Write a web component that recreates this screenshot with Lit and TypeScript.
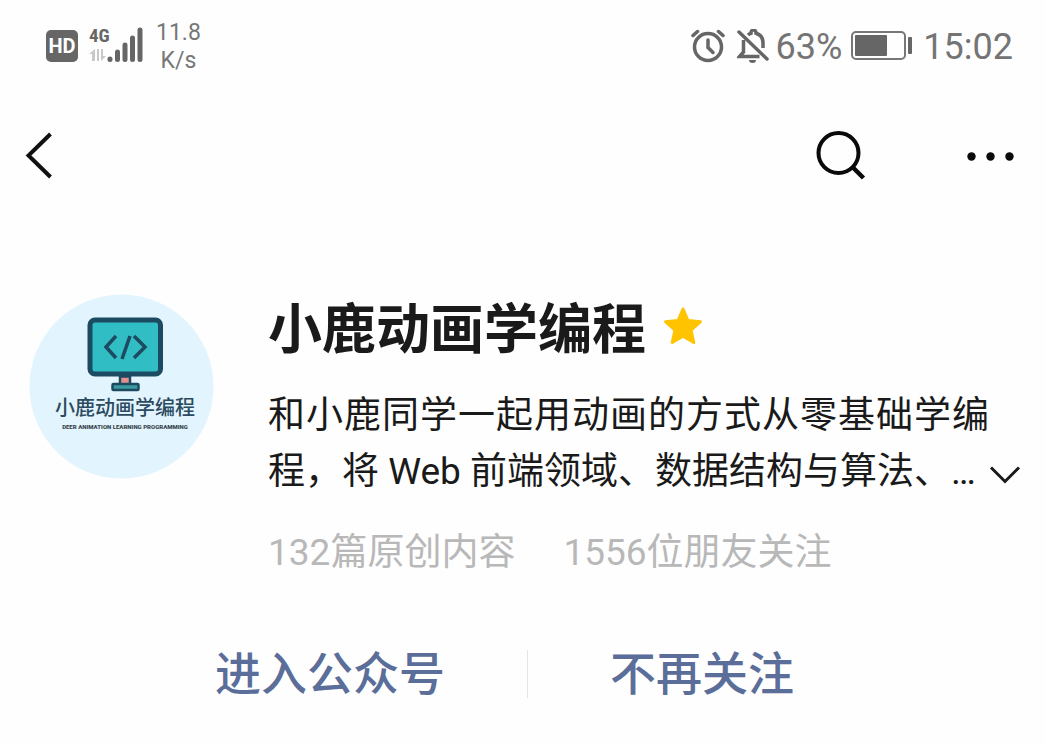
import { LitElement, html, css } from "lit";
import { customElement, property } from "lit/decorators.js";

@customElement("status-bar")
class StatusBar extends LitElement {
  static styles = css`
    :host {
      display: flex;
      justify-content: space-between;
      align-items: center;
      height: 92px;
      padding: 0 32px 0 46px;
      box-sizing: border-box;
      color: #747474;
      font-family: Roboto, "Noto Sans CJK SC", sans-serif;
      font-weight: 400;
    }
    svg { display: block; flex: none; }
    .group { display: flex; align-items: center; }
    .network { margin-left: 10px; }
    .hd { font: 700 20px Roboto, sans-serif; fill: #fff; }
    .gen { font: 700 19px "Roboto Condensed", "Liberation Sans Narrow", Roboto, sans-serif; fill: #666; }
    .speed {
      margin-left: 12px;
      padding-top: 2px;
      font-size: 23px;
      line-height: 28px;
      text-align: center;
      color: #777;
    }
    .value { font-size: 36px; line-height: 44px; padding-top: 2px; }
    .bell { margin: 0 7px 0 12px; }
    .battery { margin: 0 10px 0 9px; }
  `;

  render() {
    return html`
      <div class="group">
        <svg width="32" height="34" viewBox="0 0 32 34" role="img" aria-label="HD">
          <rect y="1" width="32" height="32" rx="5" fill="#666" />
          <text class="hd" x="16" y="24" text-anchor="middle">HD</text>
        </svg>
        <svg class="network" width="56" height="48" viewBox="0 0 56 48" role="img" aria-label="4G">
          <text class="gen" x="1" y="20">4G</text>
          <path d="M7 27v12H4v-7H1zM9 27h2v12H9zM13 27h2v7h3l-5 5z" fill="#c8c8c8" />
          <g stroke="#666" stroke-width="5" stroke-linecap="round">
            <path d="M22 37v.5M29.500 30v7.500M37 23v14.500M44.500 16v21.500M52 8v29.500" />
          </g>
        </svg>
        <div class="speed">11.8<br />K/s</div>
      </div>
      <div class="group">
        <svg width="34" height="34" viewBox="0 0 34 34" fill="none" stroke="#666" stroke-linecap="round">
          <circle cx="17" cy="18" r="13.500" stroke-width="3.500" />
          <path d="M17 11v7.500l5 5" stroke-width="3.500" />
          <path d="M2 6.500 6.500 2.500M32 6.500 27.500 2.500" stroke-width="3.500" />
        </svg>
        <svg class="bell" width="32" height="34" viewBox="0 0 32 34" fill="none" stroke="#666" stroke-width="3.500">
          <path d="M2 3 30 30" stroke-linecap="round" />
          <path d="M6.500 11v12l-4 4.500h20M11 6c1-1 2-1.500 3-1.800V3.500a2.500 2.500 0 0 1 5 0v.7c4.500 1.300 7 5 7 9.800v5" />
          <path d="M12 31h7a3.500 3 0 0 1-7 0z" fill="#666" stroke="none" />
        </svg>
        <span class="value">63%</span>
        <svg class="battery" width="62" height="30" viewBox="0 0 62 30">
          <rect x="1" y="1" width="53" height="27" rx="4" fill="none" stroke="#777" stroke-width="2" />
          <rect x="4" y="4" width="32" height="21" rx="1" fill="#666" />
          <rect x="57" y="6" width="4" height="17" rx="1" fill="#666" />
        </svg>
        <span class="value">15:02</span>
      </div>
    `;
  }
}

@customElement("nav-bar")
class NavBar extends LitElement {
  static styles = css`
    :host {
      display: flex;
      justify-content: space-between;
      align-items: center;
      height: 128px;
      padding: 0 29px 0 24px;
      box-sizing: border-box;
    }
    button { display: block; padding: 0; border: 0; background: none; cursor: pointer; }
    svg { display: block; }
    .tools { display: flex; align-items: center; gap: 100px; }
  `;

  render() {
    return html`
      <button aria-label="返回">
        <svg width="32" height="48" viewBox="0 0 32 48" fill="none" stroke="#111" stroke-width="4">
          <path d="M26.500 2 4.500 23.500l22 21.500" />
        </svg>
      </button>
      <div class="tools">
        <button aria-label="搜索">
          <svg width="52" height="52" viewBox="0 0 52 52" fill="none" stroke="#0a0a0a" stroke-width="4">
            <circle cx="24.500" cy="23" r="20" />
            <path d="M38.500 37 49.500 48" stroke-width="4.500" />
          </svg>
        </button>
        <button aria-label="更多">
          <svg width="50" height="12" viewBox="0 0 50 12" fill="#0a0a0a">
            <circle cx="5.500" cy="6.500" r="4.200" />
            <circle cx="24.500" cy="6.500" r="4.200" />
            <circle cx="43.500" cy="6.500" r="4.200" />
          </svg>
        </button>
      </div>
    `;
  }
}

@customElement("account-avatar")
class AccountAvatar extends LitElement {
  static styles = css`
    :host { display: block; }
    svg { display: block; }
    .name { font: 500 20px "Noto Sans CJK SC", sans-serif; fill: #2c4a60; }
    .sub { font: 900 6px Roboto, sans-serif; fill: #3a4650; }
  `;

  render() {
    return html`
      <svg width="186" height="186" viewBox="0 0 186 186" role="img" aria-label="小鹿动画学编程">
        <circle cx="92.500" cy="92.500" r="92" fill="#e2f4fd" />
        <rect x="61" y="26" width="70.500" height="54" rx="5" fill="#31bdc4" stroke="#1c4a60" stroke-width="5" />
        <path d="M91 82.500h10v8H91z" fill="#e58e8e" stroke="#1c4a60" stroke-width="2.500" />
        <rect x="83.500" y="90" width="26" height="6" rx="1" fill="#3a9ba3" stroke="#1c4a60" stroke-width="2.500" />
        <path d="M87 42 77 53l10 11M105 42l11 11-11 11M101 42l-8 23" fill="none" stroke="#1c4a60" stroke-width="3.500" />
        <text class="name" x="96" y="121" text-anchor="middle">小鹿动画学编程</text>
        <text class="sub" x="96" y="135" text-anchor="middle">DEER ANIMATION LEARNING PROGRAMMING</text>
      </svg>
    `;
  }
}

@customElement("account-card")
class AccountCard extends LitElement {
  @property() name = "";
  @property() intro = "";
  @property({ type: Number }) articles = 0;
  @property({ type: Number }) friends = 0;

  static styles = css`
    :host {
      display: grid;
      grid-template-columns: 186px minmax(0, 1fr);
      column-gap: 53px;
      padding: 74px 24px 0 29px;
      color: #1a1a1a;
    }
    h1, p { margin: 0; }
    svg { display: block; flex: none; }
    .heading { display: flex; align-items: flex-start; gap: 17px; }
    h1 { font-size: 54px; line-height: 74px; font-weight: 700; }
    .star { padding-top: 12px; }
    .about { display: flex; align-items: flex-end; margin-top: 20px; }
    .intro { flex: 1; font-size: 37px; line-height: 56px; text-align: justify; }
    .expand { display: block; padding: 0 0 15px; border: 0; background: none; cursor: pointer; }
    .stats {
      display: flex;
      gap: 48px;
      margin-top: 25px;
      font-size: 37px;
      line-height: 56px;
      font-weight: 400;
      color: #b8b8b8;
    }
  `;

  render() {
    return html`
      <account-avatar></account-avatar>
      <div>
        <div class="heading">
          <h1>${this.name}</h1>
          <svg class="star" width="40" height="40" viewBox="0 0 40 40" role="img" aria-label="星标">
            <path
              d="M20 3l5 11.500 12.500 1.200-9.400 8.500 2.700 12.300L20 30.200 9.200 36.500l2.700-12.300-9.400-8.500L15 14.500z"
              fill="#ffc300" stroke="#ffc300" stroke-width="3" stroke-linejoin="round" />
          </svg>
        </div>
        <div class="about">
          <p class="intro">${this.intro}</p>
          <button class="expand" aria-label="展开">
            <svg width="32" height="20" viewBox="0 0 32 20" fill="none" stroke="#1a1a1a" stroke-width="3">
              <path d="M2 2.500 16 16.500 30 2.500" />
            </svg>
          </button>
        </div>
        <div class="stats">
          <span>${this.articles}篇原创内容</span>
          <span>${this.friends}位朋友关注</span>
        </div>
      </div>
    `;
  }
}

@customElement("app-root")
class AppRoot extends LitElement {
  static styles = css`
    :host {
      display: block;
      min-height: 100vh;
      background: #fefefe;
      font-family: Roboto, "Noto Sans CJK SC", sans-serif;
    }
    .actions {
      display: flex;
      justify-content: center;
      align-items: center;
      padding: 61px 36px 39px 0;
    }
    .action {
      padding: 0 82px;
      border: 0;
      background: none;
      color: #5b6e99;
      font: 500 46px/64px Roboto, "Noto Sans CJK SC", sans-serif;
      white-space: nowrap;
      cursor: pointer;
    }
    .divider { width: 1px; height: 48px; background: #e4e4e4; }
  `;

  render() {
    return html`
      <status-bar></status-bar>
      <nav-bar></nav-bar>
      <account-card
        name="小鹿动画学编程"
        intro="和小鹿同学一起用动画的方式从零基础学编程，将 Web 前端领域、数据结构与算法、…"
        articles="132"
        friends="1556"
      ></account-card>
      <div class="actions">
        <button class="action">进入公众号</button>
        <div class="divider"></div>
        <button class="action">不再关注</button>
      </div>
    `;
  }
}
